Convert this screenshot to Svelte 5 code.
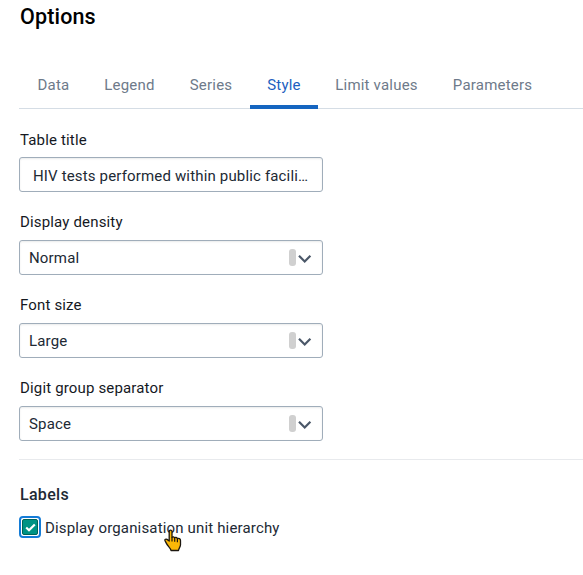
<script>
  const tabs = [
    { name: 'Data', width: 67 },
    { name: 'Legend', width: 85 },
    { name: 'Series', width: 78 },
    { name: 'Style', width: 68 },
    { name: 'Limit values', width: 117 },
    { name: 'Parameters', width: 115 }
  ];
  const selects = [
    { label: 'Display density', value: 'Normal' },
    { label: 'Font size', value: 'Large' },
    { label: 'Digit group separator', value: 'Space' }
  ];
  let active = $state('Style');
</script>

<main>
  <h1>Options</h1>
  <nav>
    {#each tabs as tab}
      <button class:active={active === tab.name} style="width: {tab.width}px" onclick={() => (active = tab.name)}>{tab.name}</button>
    {/each}
  </nav>

  <section class="fields">
    <div class="field">
      <div class="label">Table title</div>
      <div class="box title"><span>HIV tests performed within public facili…</span></div>
    </div>
    {#each selects as s}
      <div class="field">
        <div class="label">{s.label}</div>
        <div class="box">
          <span>{s.value}</span>
          <i class="bar"></i>
          <svg class="chevron" width="14" height="10" viewBox="0 0 14 10"><path d="M1 1.8 6.7 7.5l5.7-5.7" fill="none" stroke="#4a5768" stroke-width="2.2" /></svg>
        </div>
      </div>
    {/each}
  </section>

  <section class="labels">
    <h2>Labels</h2>
    <div class="check">
      <span class="ring"><span class="tick">
        <svg width="13" height="13" viewBox="0 0 13 13"><path d="M2.2 6.5 5 9.2l5.8-5.7" fill="none" stroke="#fff" stroke-width="2.2" /></svg>
      </span></span>
      <span class="text">Display organisation unit hierarchy</span>
      <svg class="hand" width="18" height="23" viewBox="0 0 18 23">
        <path d="M5.6 1.5c.9-.8 2.4-.2 2.4 1.3v5.4c.8-.7 2.2-.5 2.6.5.8-.6 2.3-.3 2.7.8 1.6-.6 3.2.2 3.2 2v4.2c0 2.2-1.7 3.3-2 5.8H7c-.5-2.7-3.2-4.2-4.6-7.1L1 11.6c-.5-1.2.9-2 2-1.2L5.2 12V2.8c0-.5.1-.9.4-1.3Z" fill="#fcb807" stroke="#1c1710" stroke-width="1.3" stroke-linejoin="round" />
        <path d="M8 8v4.5M10.7 8.8v4M13.4 9.6v3.7" stroke="#1c1710" stroke-width="1.2" />
      </svg>
    </div>
  </section>
</main>

<style>
  :global(body) { margin: 0; background: #fff; }
  main {
    box-sizing: border-box;
    width: 583px;
    height: 575px;
    padding-left: 19px;
    overflow: hidden;
    font-family: Roboto, sans-serif;
    font-size: 15px;
    letter-spacing: 0.16px;
    color: #212934;
  }
  h1 {
    margin: 0;
    padding: 3px 0 0 1px;
    height: 60px;
    box-sizing: border-box;
    font-size: 21.5px;
    line-height: 27px;
    font-weight: 500;
    letter-spacing: 0.15px;
    color: #000;
  }
  nav {
    display: flex;
    height: 49px;
    padding-left: 1px;
    box-sizing: border-box;
    border-bottom: 1px solid #d5dde5;
    letter-spacing: 0.2px;
  }
  button {
    box-sizing: border-box;
    height: 49px;
    flex: none;
    padding: 5px 0 0;
    border: 0;
    border-bottom: 4px solid transparent;
    background: none;
    font: inherit;
    letter-spacing: inherit;
    color: #6e7a8a;
  }
  button.active { color: #1d5fc0; border-color: #1565c0; }
  .fields { padding-top: 20px; height: 350px; box-sizing: border-box; }
  .field { height: 83px; }
  .field:first-child { height: 82px; }
  .label { height: 29px; line-height: 22px; padding-left: 1px; color: #15191f; }
  .field:first-child .label { height: 28px; }
  .box {
    display: flex;
    align-items: center;
    box-sizing: border-box;
    width: 304px;
    height: 35px;
    padding: 0 10px 0 9px;
    border: 1px solid #a0adba;
    border-radius: 3px;
    box-shadow: inset 0 1px 2px rgba(48, 54, 60, .1);
    white-space: nowrap;
  }
  .title { padding: 2px 0 0 13px; }
  .bar { width: 7px; height: 17px; margin-left: auto; border-radius: 3px; background: #d0d0d0; }
  .chevron { margin: 3px 0 0 2px; }
  .labels { border-top: 1px solid #e8eaed; }
  h2 { margin: 0; padding: 24px 0 0 1px; height: 56px; box-sizing: border-box; font-size: 16px; line-height: 22px; font-weight: 500; letter-spacing: 0.3px; }
  .check { position: relative; display: flex; align-items: center; height: 22px; }
  .ring { display: flex; align-items: center; justify-content: center; box-sizing: border-box; width: 22px; height: 22px; border: 2px solid #147cd7; border-radius: 4px; }
  .tick { display: flex; align-items: center; justify-content: center; box-sizing: border-box; width: 16px; height: 16px; border: 1px solid #006457; border-radius: 2px; background: #009384; }
  .text { margin-left: 4px; padding-top: 2px; }
  .hand { position: absolute; left: 145px; top: 13px; }
</style>
